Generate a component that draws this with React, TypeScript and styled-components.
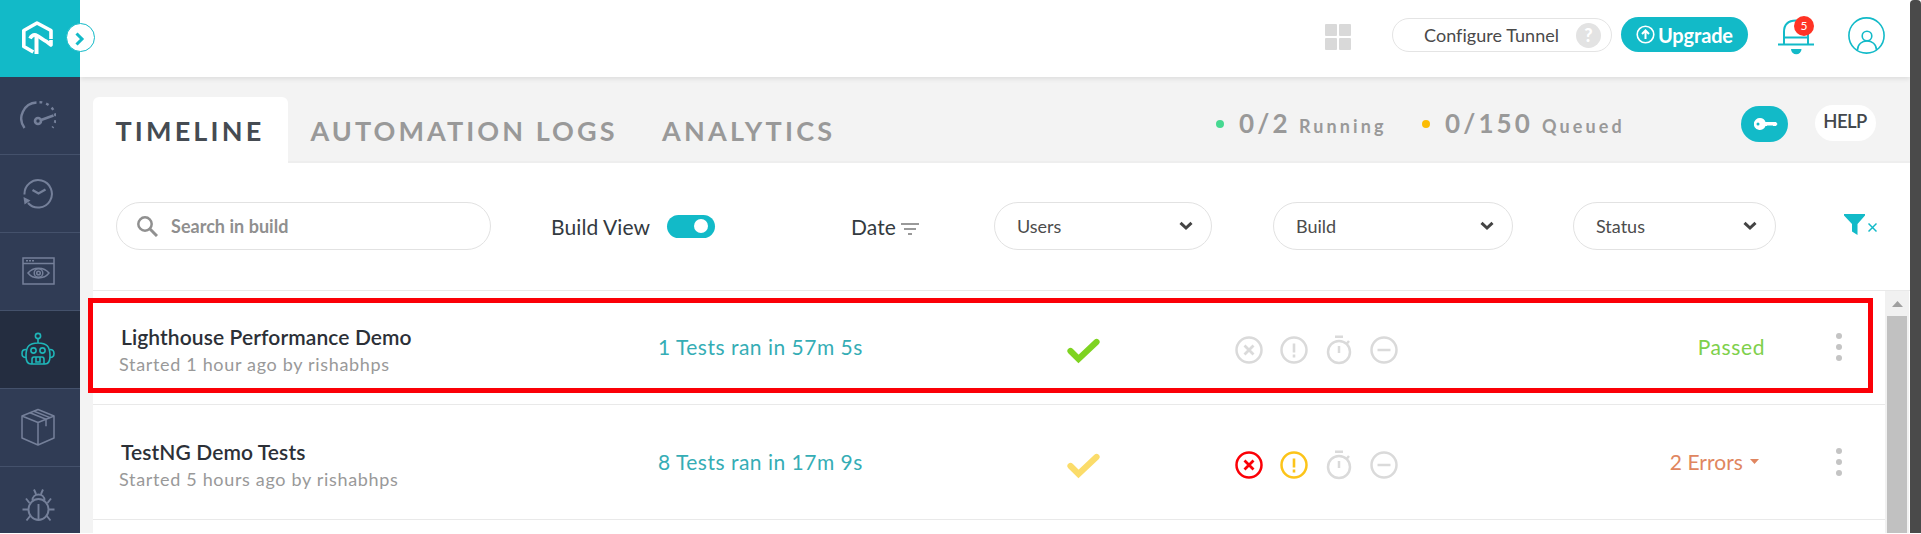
import React from "react";
import styled, { createGlobalStyle } from "styled-components";

const TEAL = "#12bac8";

const Global = createGlobalStyle`
  * { box-sizing: border-box; }
  html, body { margin: 0; background: #fff; }
  body { font-family: Lato, "Liberation Sans", sans-serif; overflow: hidden; }
  svg { display: block; flex: none; }
`;

const Screen = styled.div`
  display: flex;
  width: 1921px;
  height: 533px;
  overflow: hidden;
`;

const Sidebar = styled.nav`
  position: relative;
  width: 80px;
  flex: none;
  background: #303c55;
`;

const LogoTile = styled.div`
  height: 77px;
  background: ${TEAL};
  padding: 20px 0 0 21px;
`;

const Expand = styled.button`
  position: absolute;
  z-index: 3;
  left: 66px;
  top: 23px;
  width: 29px;
  height: 29px;
  padding: 2px 1px 0 0;
  border: 1px solid ${TEAL};
  border-radius: 50%;
  background: #fff;
  display: grid;
  place-items: center;
`;

const NavItem = styled.a<{ $active?: boolean }>`
  display: flex;
  align-items: center;
  justify-content: center;
  height: 78px;
  padding: 0 4px 2px 0;
  border-bottom: 1px solid #44516b;
  background: ${(p) => (p.$active ? "#242d40" : "#303c55")};
  color: ${(p) => (p.$active ? "#1fb5b8" : "#75809a")};
`;

const Main = styled.main`
  width: 1830px;
  flex: none;
  display: flex;
  flex-direction: column;
  background: #f3f3f3;
`;

const Header = styled.header`
  display: flex;
  height: 77px;
  flex: none;
  padding-left: 1245px;
  background: #fff;
  box-shadow: 0 2px 5px rgba(0, 0, 0, 0.09);
`;

const GridIcon = styled.div`
  display: grid;
  grid-template-columns: 12px 12px;
  grid-template-rows: 12px 12px;
  gap: 2px;
  margin: 24px 41px 0 0;
  height: 26px;
`;

const Tile = styled.i`
  background: #d9d9d9;
  border-radius: 1px;
`;

const Tunnel = styled.div`
  display: flex;
  align-items: center;
  width: 220px;
  height: 34px;
  margin: 18px 9px 0 0;
  padding: 0 10px 0 31px;
  justify-content: space-between;
  border: 1px solid #e4e4e4;
  border-radius: 17px;
  font-size: 18px;
  letter-spacing: 0.05px;
  color: #4a4a4a;
`;

const Question = styled.span`
  width: 25px;
  height: 25px;
  border-radius: 50%;
  background: #e3e3e3;
  color: #fff;
  font-weight: 900;
  font-size: 18px;
  line-height: 24px;
  text-align: center;
`;

const Upgrade = styled.button`
  display: flex;
  align-items: center;
  gap: 3px;
  width: 127px;
  height: 35px;
  margin: 17px 30px 0 0;
  padding: 0 0 0 15px;
  border: 0;
  border-radius: 18px;
  background: ${TEAL};
  color: #fff;
  font: 700 20px Lato, sans-serif;
  letter-spacing: -0.15px;
`;

const Bell = styled.div`
  position: relative;
  width: 36px;
  height: 36px;
  margin: 19px 34px 0 0;
`;

const Badge = styled.span`
  position: absolute;
  left: 16px;
  top: -3px;
  width: 20px;
  height: 20px;
  border-radius: 50%;
  background: #ff3324;
  color: #fff;
  font-size: 12px;
  line-height: 20px;
  text-align: center;
`;

const Profile = styled.div`
  margin-top: 17px;
`;

const TabBar = styled.div`
  display: flex;
  height: 86px;
  flex: none;
  margin-left: 13px;
  padding-top: 20px;
  box-shadow: inset 0 -2px 0 #eeeeee;
`;

const Tab = styled.a<{ $active?: boolean; $w: number; $pad: number; $ls: number }>`
  width: ${(p) => p.$w}px;
  height: 66px;
  flex: none;
  padding-left: ${(p) => p.$pad}px;
  border-radius: 6px 6px 0 0;
  background: ${(p) => (p.$active ? "#fff" : "transparent")};
  color: ${(p) => (p.$active ? "#454b52" : "#999")};
  font-size: 27px;
  font-weight: 700;
  line-height: 67px;
  letter-spacing: ${(p) => p.$ls}px;
  white-space: nowrap;
`;

const Counter = styled.div<{ $w: number }>`
  display: flex;
  align-items: baseline;
  width: ${(p) => p.$w}px;
  height: 53px;
  flex: none;
  color: #999;
  white-space: nowrap;
  line-height: 52px;
`;

const Dot = styled.i<{ $color: string }>`
  width: 8px;
  height: 8px;
  margin-right: 15px;
  align-self: center;
  border-radius: 50%;
  background: ${(p) => p.$color};
`;

const Count = styled.b<{ $w: number }>`
  width: ${(p) => p.$w}px;
  font-size: 26px;
  letter-spacing: 3.1px;
`;

const CountLabel = styled.b`
  font-size: 18px;
  letter-spacing: 3.1px;
`;

const KeyButton = styled.button`
  display: grid;
  place-items: center;
  width: 47px;
  height: 36px;
  margin: 9px 27px 0 0;
  padding: 0 0 0 3px;
  border: 0;
  border-radius: 18px;
  background: ${TEAL};
`;

const Help = styled.button`
  width: 61px;
  height: 36px;
  margin-top: 8px;
  padding: 0 1px 4px 0;
  border: 0;
  border-radius: 18px;
  background: #fff;
  color: #44484d;
  font: 600 18.5px Lato, sans-serif;
  letter-spacing: -0.6px;
`;

const Filters = styled.section`
  position: relative;
  z-index: 1;
  display: flex;
  align-items: center;
  height: 127px;
  flex: none;
  margin-left: 13px;
  padding: 0 0 1px 23px;
  box-shadow: 0 1px 0 #e9e9e9;
  background: #fff;
`;

const Search = styled.label`
  display: flex;
  align-items: center;
  gap: 13px;
  width: 375px;
  height: 48px;
  padding-left: 20px;
  border: 1px solid #e2e2e2;
  border-radius: 24px;
  color: #8f8f8f;
  font-size: 18px;
  font-weight: 700;
  letter-spacing: 0.03px;
`;

const FilterLabel = styled.span<{ $w: number; $left: number }>`
  width: ${(p) => p.$w}px;
  margin-left: ${(p) => p.$left}px;
  padding-top: 1px;
  color: #333a40;
  font-size: 21px;
  letter-spacing: 0.1px;
  white-space: nowrap;
`;

const Toggle = styled.span`
  display: flex;
  justify-content: flex-end;
  align-items: center;
  width: 48px;
  height: 23px;
  padding-right: 7px;
  border-radius: 12px;
  background: ${TEAL};
`;

const Knob = styled.i`
  width: 14px;
  height: 14px;
  border-radius: 50%;
  background: #fff;
`;

const Select = styled.div<{ $w: number; $left: number }>`
  display: flex;
  align-items: center;
  justify-content: space-between;
  width: ${(p) => p.$w}px;
  height: 48px;
  margin-left: ${(p) => p.$left}px;
  padding: 0 18px 0 22px;
  border: 1px solid #e2e2e2;
  border-radius: 24px;
  color: #4c4c4c;
  font-size: 18px;
`;

const ClearFilter = styled.div`
  display: flex;
  align-items: flex-end;
  gap: 3px;
  margin: 0 0 3px 68px;
`;

const ListArea = styled.div`
  display: flex;
  flex: 1;
  margin-left: 13px;
  background: #fff;
`;

const Rows = styled.div`
  width: 1792px;
  flex: none;
`;

const Row = styled.article`
  position: relative;
  z-index: 2;
  display: grid;
  grid-template-columns: 565px 383px 168px 432px 123px 1fr;
  height: 115px;
  border-bottom: 1px solid #e9e9e9;
`;

const Highlight = styled.div`
  position: absolute;
  z-index: 2;
  left: -5px;
  top: 8px;
  width: 1785px;
  height: 95px;
  border: 5px solid #fb0007;
  pointer-events: none;
`;

const BuildCell = styled.div`
  padding: 34px 0 0 26px;
`;

const BuildName = styled.div`
  padding-left: 2px;
  color: #2c3037;
  font-size: 21px;
  font-weight: 600;
  line-height: 26px;
  letter-spacing: 0.1px;
`;

const BuildMeta = styled.div`
  color: #999;
  font-size: 18px;
  line-height: 28px;
  letter-spacing: 0.67px;
`;

const Ran = styled.div`
  padding-top: 44px;
  color: #35adb5;
  font-size: 21px;
  line-height: 26px;
  letter-spacing: 0.5px;
`;

const CheckCell = styled.div`
  padding: 48px 0 0 25px;
`;

const StatusIcons = styled.div`
  display: flex;
  gap: 17px;
  padding: 45px 0 0 25.5px;
`;

const Result = styled.div<{ $color: string; $inset: number; $ls: number }>`
  display: flex;
  justify-content: flex-end;
  align-items: center;
  gap: 7px;
  height: 26px;
  margin: 43px ${(p) => p.$inset}px 0 0;
  color: ${(p) => p.$color};
  font-size: 21px;
  letter-spacing: ${(p) => p.$ls}px;
  white-space: nowrap;
`;

const Menu = styled.div`
  display: flex;
  flex-direction: column;
  gap: 5px;
  padding: 43px 0 0 72px;
`;

const MenuDot = styled.i`
  width: 6px;
  height: 6px;
  border-radius: 50%;
  background: #c4c4c4;
`;

const Scroll = styled.div`
  width: 24px;
  padding: 0 2px 0 2px;
  background: #f1f1f1;
`;

const ScrollUp = styled.div`
  display: grid;
  place-items: center;
  height: 26px;
  padding-top: 2px;
`;

const Thumb = styled.div`
  height: 217px;
  background: #c1c1c1;
`;

const WindowBar = styled.div`
  width: 11px;
  flex: none;
  border-radius: 4px 4px 0 0;
  background: #4a4a4a;
`;

const Logo = () => (
  <svg width="33" height="36" viewBox="0 0 33 36" fill="none" stroke="#fff" strokeWidth="3.600" strokeLinejoin="round">
    <path d="M30 19v-8.500L16 3 2.800 10.500V26.500l9.500 5.500" />
    <path d="M9 18.500c1.500-3 3.500-4 6-3.500 4 2 7 5 10.500 6.500l4.500 3.500V20" />
    <path d="M15.500 16v18" strokeWidth="4" />
  </svg>
);

const Gauge = () => (
  <svg width="36" height="30" viewBox="0 0 36 30" fill="none" stroke="currentColor" strokeWidth="2.400">
    <path d="M4.500 28A16 16 0 0 1 16.500 2.500" />
    <path d="M19.500 2.200a16 16 0 0 1 13 25.500" strokeDasharray="2.800 4" />
    <circle cx="18" cy="21" r="3" strokeWidth="2.600" />
    <path d="M21 20l12.500-4.500" strokeWidth="2.600" />
  </svg>
);

const History = () => (
  <svg width="32" height="32" viewBox="0 0 32 32" fill="none" stroke="currentColor" strokeWidth="2">
    <path d="M2.500 17.500A13.700 13.700 0 1 1 6 26" />
    <path d="M10.500 13l6 3.500 7-4" strokeWidth="2.300" />
    <path d="M1.500 20l7 3.500-6 4z" fill="currentColor" stroke="none" />
  </svg>
);

const BrowserEye = () => (
  <svg width="33" height="28" viewBox="0 0 33 28" fill="none" stroke="currentColor" strokeWidth="1.500">
    <path d="M1 1h31v26H1zM1 6.500h31M4 3.800h2M7 3.800h2M10 3.800h2" />
    <path d="M6 16c5-6.500 16-6.500 21 0-5 6.500-16 6.500-21 0z" />
    <circle cx="16.500" cy="16" r="4.300" />
    <circle cx="16.500" cy="16" r="1.800" />
  </svg>
);

const Robot = () => (
  <svg width="34" height="34" viewBox="0 0 34 34" fill="none" stroke="currentColor" strokeWidth="1.600">
    <circle cx="17" cy="4" r="2.600" />
    <path d="M17 7v4M5 24c0-10 3.500-13 12-13s12 3 12 13c0 5-1 8-5 8H10c-4 0-5-3-5-8z" />
    <path d="M5 17.500c-3 0-4 1-4 4s1 4 4 4M29 17.500c3 0 4 1 4 4s-1 4-4 4" />
    <circle cx="12.500" cy="18.500" r="2.600" />
    <circle cx="21.500" cy="18.500" r="2.600" />
    <path d="M11 32v-4.500c0-1.500.5-2.500 2-2.500h8c1.500 0 2 1 2 2.500V32M15 25v5h4v-5" />
  </svg>
);

const Box = () => (
  <svg width="34" height="38" viewBox="0 0 34 38" fill="none" stroke="currentColor" strokeWidth="1.500" strokeLinejoin="round">
    <path d="M17 1.500L33 8v22l-16 7L1 30V8zM1 8l16 6.500L33 8M17 14.500V37" />
    <path d="M9 4.800l16 6.500v7M13 3.200L29 9.600" />
  </svg>
);

const Bug = () => (
  <svg width="33" height="34" viewBox="0 0 33 34" fill="none" stroke="currentColor" strokeWidth="1.900">
    <ellipse cx="16.500" cy="21.500" rx="10" ry="10.500" />
    <path d="M16.500 16v15M10.500 12.500c0-8 12-8 12 0M14 6L12 1.500M19 6L21 1.500" />
    <path d="M7.500 15L4 10.500M25.500 15l3.500-4.500M7 21.500H.5M26 21.500h6.500M8.500 27.500l-4 5M24.500 27.500l4 5" />
  </svg>
);

const BellIcon = () => (
  <svg width="36" height="36" viewBox="0 0 36 36" fill="none" stroke={TEAL} strokeWidth="2">
    <path d="M6 25V13C6 5 11 1.500 18 1.500S30 5 30 13v12M6 18.500h24M0 25.500h36" />
    <path d="M13 30h10.500a5.200 5.200 0 0 1-10.500 0z" fill={TEAL} stroke="none" />
  </svg>
);

const ProfileIcon = () => (
  <svg width="37" height="37" viewBox="0 0 37 37" fill="none" stroke={TEAL} strokeWidth="1.600">
    <circle cx="18.500" cy="18.500" r="17.600" />
    <circle cx="19" cy="19" r="4.800" />
    <path d="M9.500 33c0-12 19-12 19 0" />
  </svg>
);

const Chevron = () => (
  <svg width="14" height="10" viewBox="0 0 14 10" fill="none" stroke="#444" strokeWidth="3">
    <path d="M1.500 1.800L7 7l5.500-5.200" />
  </svg>
);

const Check = ({ color }: { color: string }) => (
  <svg width="34" height="26" viewBox="0 0 34 26" fill="none" stroke={color} strokeWidth="6.200" strokeLinecap="round">
    <path d="M4.500 13l8 8L30.500 4" />
  </svg>
);

type Kind = "cross" | "alert" | "timer" | "minus";
const glyphs: Record<Kind, React.ReactNode> = {
  cross: (<><circle cx="14" cy="15" r="12.500" /><path d="M9.500 10.500l9 9M18.500 10.500l-9 9" strokeWidth="2.800" /></>),
  alert: (<><circle cx="14" cy="15" r="12.500" /><path d="M14 8.500v9M14 19.500v3" strokeWidth="2.600" /></>),
  timer: (<><circle cx="14" cy="17" r="11" /><path d="M10 1.700h8M14 11v7M21.500 9l2.500-3" /></>),
  minus: (<><circle cx="14" cy="15" r="12.500" /><path d="M7.500 15h13" /></>),
};

const StatusGlyph = ({ kind, color = "#dadada" }: { kind: Kind; color?: string }) => (
  <svg width="28" height="30" viewBox="0 0 28 30" fill="none" stroke={color} strokeWidth="2.500">
    {glyphs[kind]}
  </svg>
);

interface Build {
  name: string;
  meta: string;
  ran: string;
  check: string;
  cross?: string;
  alert?: string;
  result: string;
  resultColor: string;
  caret?: boolean;
  highlighted?: boolean;
}

const builds: Build[] = [
  { name: "Lighthouse Performance Demo", meta: "Started 1 hour ago by rishabhps", ran: "1 Tests ran in 57m 5s", check: "#7ed321", result: "Passed", resultColor: "#7ed04b", highlighted: true },
  { name: "TestNG Demo Tests", meta: "Started 5 hours ago by rishabhps", ran: "8 Tests ran in 17m 9s", check: "#fbdc6a", cross: "#fb0007", alert: "#fcc419", result: "2 Errors", resultColor: "#e08660", caret: true },
];

const navIcons = [Gauge, History, BrowserEye, Robot, Box, Bug];

export default function App() {
  return (
    <Screen>
      <Global />
      <Sidebar>
        <LogoTile><Logo /></LogoTile>
        <Expand aria-label="Expand">
          <svg width="10" height="14" viewBox="0 0 10 14" fill="none" stroke={TEAL} strokeWidth="3"><path d="M1.500 1.500L7 7l-5.500 5.500" /></svg>
        </Expand>
        {navIcons.map((Icon, i) => (
          <NavItem key={i} $active={i === 3}><Icon /></NavItem>
        ))}
      </Sidebar>
      <Main>
        <Header>
          <GridIcon><Tile /><Tile /><Tile /><Tile /></GridIcon>
          <Tunnel>Configure Tunnel<Question>?</Question></Tunnel>
          <Upgrade>
            <svg width="19" height="19" viewBox="0 0 19 19" fill="none" stroke="#fff" strokeWidth="1.600"><circle cx="9.500" cy="9.500" r="8.300" /><path d="M9.500 14V6M6 9l3.500-3.500L13 9" strokeWidth="2" /></svg>
            Upgrade
          </Upgrade>
          <Bell><BellIcon /><Badge>5</Badge></Bell>
          <Profile><ProfileIcon /></Profile>
        </Header>
        <TabBar>
          <Tab $active $w={195} $pad={22.5} $ls={3.15}>TIMELINE</Tab>
          <Tab $w={350} $pad={22.5} $ls={3.07}>AUTOMATION LOGS</Tab>
          <Tab $w={578} $pad={24} $ls={3.25}>ANALYTICS</Tab>
          <Counter $w={206}><Dot $color="#46d891" /><Count $w={60}>0/2</Count><CountLabel>Running</CountLabel></Counter>
          <Counter $w={319}><Dot $color="#fbbc05" /><Count $w={97}>0/150</Count><CountLabel>Queued</CountLabel></Counter>
          <KeyButton aria-label="Access key">
            <svg width="24" height="14" viewBox="0 0 24 14" fill="#fff"><path fillRule="evenodd" d="M6 1a6 6 0 1 0 5.500 8H13l1-1 1 1 1-1 1 1 1-1 1 1h3l1.500-2L22 5H11.500A6 6 0 0 0 6 1zM4 5.500a1.500 1.500 0 1 1 0 3 1.500 1.500 0 0 1 0-3z" /></svg>
          </KeyButton>
          <Help>HELP</Help>
        </TabBar>
        <Filters>
          <Search>
            <svg width="21" height="21" viewBox="0 0 21 21" fill="none" stroke="#909090" strokeWidth="2.500"><circle cx="8" cy="8" r="6.700" /><path d="M13 13l7 7" strokeWidth="3" /></svg>
            Search in build
          </Search>
          <FilterLabel $w={116} $left={60}>Build View</FilterLabel>
          <Toggle><Knob /></Toggle>
          <FilterLabel $w={50} $left={136}>Date</FilterLabel>
          <svg width="18" height="18" viewBox="0 0 18 18" stroke="#999" strokeWidth="2"><path d="M0 7h18M3 12h12M7 17h4" /></svg>
          <Select $w={218} $left={75}>Users<Chevron /></Select>
          <Select $w={240} $left={61}>Build<Chevron /></Select>
          <Select $w={203} $left={60}>Status<Chevron /></Select>
          <ClearFilter>
            <svg width="21" height="21" viewBox="0 0 21 21" fill={TEAL}><path d="M0 0h21v1.500L13.500 10v11L8 17.500V10L0 1.500z" /></svg>
            <svg width="9" height="13" viewBox="0 0 9 13" stroke={TEAL} strokeWidth="1.500"><path d="M.5 1.500l8 8M8.500 1.500l-8 8" /></svg>
          </ClearFilter>
        </Filters>
        <ListArea>
          <Rows>
            {builds.map((b) => (
              <Row key={b.name}>
                <BuildCell><BuildName>{b.name}</BuildName><BuildMeta>{b.meta}</BuildMeta></BuildCell>
                <Ran>{b.ran}</Ran>
                <CheckCell><Check color={b.check} /></CheckCell>
                <StatusIcons>
                  <StatusGlyph kind="cross" color={b.cross} />
                  <StatusGlyph kind="alert" color={b.alert} />
                  <StatusGlyph kind="timer" />
                  <StatusGlyph kind="minus" />
                </StatusIcons>
                <Result $color={b.resultColor} $inset={b.caret ? 5 : -1} $ls={b.caret ? 0.05 : 0.6}>
                  {b.result}
                  {b.caret && <svg width="9" height="5" viewBox="0 0 9 5" fill="currentColor"><path d="M0 0h9L4.500 5z" /></svg>}
                </Result>
                <Menu><MenuDot /><MenuDot /><MenuDot /></Menu>
                {b.highlighted && <Highlight />}
              </Row>
            ))}
          </Rows>
          <Scroll>
            <ScrollUp><svg width="11" height="6" viewBox="0 0 11 6" fill="#a0a0a0"><path d="M0 6h11L5.500 0z" /></svg></ScrollUp>
            <Thumb />
          </Scroll>
        </ListArea>
      </Main>
      <WindowBar />
    </Screen>
  );
}
